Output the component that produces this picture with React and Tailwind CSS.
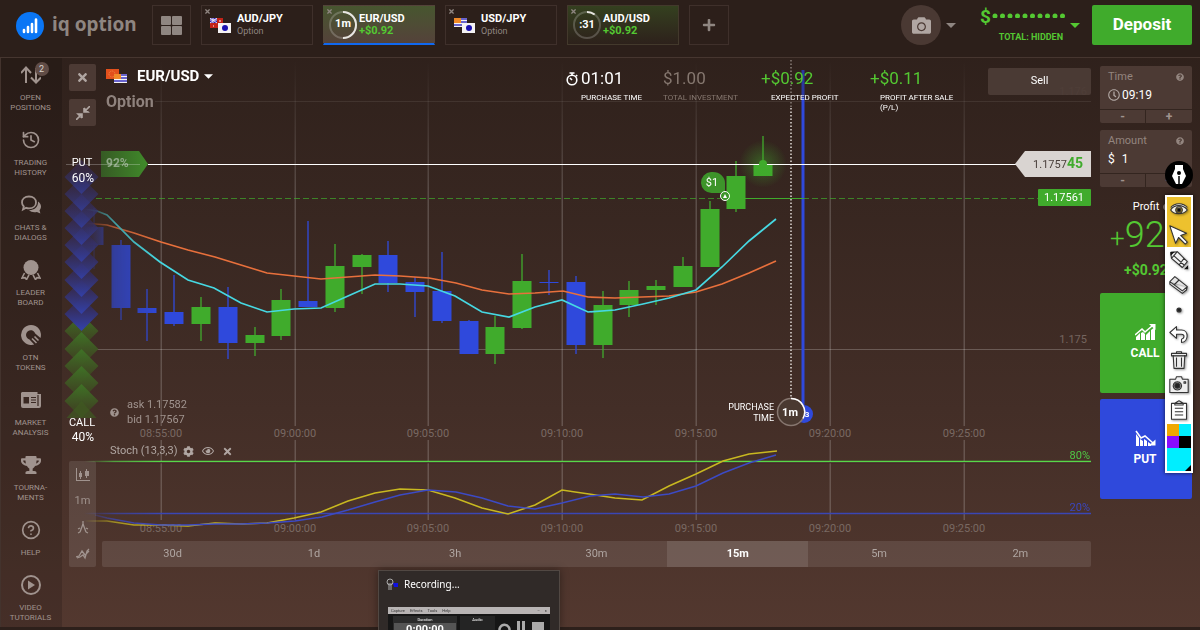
import React from "react";
import { FaCamera, FaCog, FaPlus, FaQuestionCircle, FaRegClock, FaRegEye, FaTimes, FaTrophy } from "react-icons/fa";
import { CircleHelp, History } from "lucide-react";

const GREEN = "#40ab2c";
const BLUE = "#2f49dc";

// x, top of wick, bottom of wick, top of body, bottom of body, rising
const candles = [
  [94, 208, 269, 227, 245, false],
  [121, 240, 320, 245, 308, false],
  [147, 289, 341, 308, 313, false],
  [174, 275, 326, 312, 324, false],
  [201, 297, 341, 307, 324, true],
  [228, 287, 359, 307, 343, false],
  [255, 327, 356, 335, 343, true],
  [281, 289, 340, 300, 336, true],
  [308, 221, 307, 301, 307, false],
  [335, 244, 312, 266, 308, true],
  [362, 254, 294, 255, 267, true],
  [388, 241, 292, 255, 283, false],
  [415, 277, 317, 282, 292, false],
  [442, 252, 323, 291, 321, false],
  [469, 320, 354, 321, 354, false],
  [495, 316, 364, 327, 354, true],
  [522, 254, 329, 281, 328, true],
  [549, 270, 295, 282, 283, false],
  [576, 276, 354, 282, 345, false],
  [603, 291, 358, 305, 345, true],
  [629, 281, 317, 290, 305, true],
  [656, 280, 305, 286, 290, true],
  [683, 257, 287, 266, 287, true],
  [710, 201, 267, 209, 267, true],
  [736, 161, 212, 176, 209, true],
  [763, 136, 176, 164, 176, true],
];

const fastLine =
  "84,209 97,211 107,215 134,242 160,262 188,280 214,288 241,303 267,312 294,309 321,308 348,296 375,284 400,284 428,286 455,296 482,312 509,317 535,307 562,300 588,312 615,310 643,304 669,298 696,290 722,267 749,241 776,219";
const slowLine =
  "84,223 107,225 134,233 161,242 188,250 215,257 241,265 267,273 294,276 321,279 348,277 375,275 400,276 429,278 456,283 482,290 509,294 535,293 563,291 588,297 615,298 642,297 669,296 696,292 722,284 749,273 776,261";
const stochK =
  "84,521 107,521 134,525 161,525 188,526 215,523 241,524 267,523 294,518 321,512 348,501 375,493 400,489 428,490 455,498 482,508 508,514 535,505 562,490 589,494 615,498 642,500 669,486 696,474 723,461 749,454 777,451";
const stochD =
  "95,515 107,518 134,523 161,525 188,525 215,524 241,524 268,523 295,521 322,517 348,510 375,502 400,495 428,490 456,492 482,498 508,506 535,509 562,503 590,496 615,494 643,497 669,494 696,486 723,473 749,463 776,455";

const timeMarks = [
  [161, "08:55:00"],
  [295, "09:00:00"],
  [428, "09:05:00"],
  [562, "09:10:00"],
  [696, "09:15:00"],
  [830, "09:20:00"],
  [964, "09:25:00"],
];

const putMarks = [314, 297, 280, 262, 245, 228, 211, 194, 177];
const callMarks = [331, 349, 366, 383, 401];

const timeframes = ["30d", "1d", "3h", "30m", "15m", "5m", "2m"];

const PositionsIcon = () => (
  <svg viewBox="0 0 20 20" className="h-5 w-5" fill="none" stroke="currentColor" strokeWidth="2">
    <path d="M5 18V2M0 8l5-5.500L10 8M15 3v14M10 12.500l5 5 5-5" />
  </svg>
);

const ChatsIcon = () => (
  <svg viewBox="0 0 20 20" className="h-5 w-5" fill="none" stroke="currentColor" strokeWidth="1.800">
    <path d="M8 1.500c4.200 0 7 2.600 7 5.900s-2.800 5.900-7 5.900c-1 0-2-.2-2.800-.5L2 14.500l.8-3C1.600 10.300 1 9 1 7.400 1 4.100 3.800 1.500 8 1.500z" />
    <path d="M17 6.500c1.800 1.200 3 3 3 5 0 1.500-.6 2.700-1.500 3.700l.9 3.300-3.500-1.600c-3 .7-6 .1-8-1.700 5 .2 9.500-3 9.100-8.700z" fill="currentColor" stroke="none" />
  </svg>
);

const LeaderIcon = () => (
  <svg viewBox="0 0 20 20" className="h-5 w-5">
    <circle cx="10" cy="7.500" r="7.500" fill="currentColor" />
    <path d="M3.500 13L1 18l3-.4 1.500 2 2.500-4.800M16.500 13l2.500 5-3-.4-1.500 2-2.500-4.800" fill="none" stroke="currentColor" strokeWidth="1.600" />
  </svg>
);

const TokensIcon = () => (
  <svg viewBox="0 0 20 20" className="h-5 w-5" fill="currentColor">
    <path d="M10 0a10 10 0 0 1 9.500 13l-5.300-4.600A4.700 4.700 0 1 0 8.500 14.500l4.700 5A10 10 0 1 1 10 0z" />
    <path d="M11 13.500l4.500 4.500M13.500 11.500l4 4" stroke="currentColor" strokeWidth="1.600" />
  </svg>
);

const NewsIcon = () => (
  <svg viewBox="0 0 20 20" className="h-5 w-5">
    <path d="M1 2h15.500v2H20v12a2 2 0 0 1-2 2H2a2 2 0 0 1-2-2V3z" fill="currentColor" />
    <path d="M2.500 7H8v6.500H2.500z" fill="#3a2822" />
    <path d="M10 7.500h5M10 10h5M10 12.500h5M17 5v11" stroke="#3a2822" strokeWidth="1.200" />
  </svg>
);

const PlayIcon = () => (
  <svg viewBox="0 0 20 20" className="h-5 w-5">
    <circle cx="10" cy="10" r="9" fill="none" stroke="currentColor" strokeWidth="2" />
    <path d="M7 5.500l7 4.500-7 4.500z" fill="currentColor" />
  </svg>
);

const menu = [
  { lines: ["OPEN", "POSITIONS"], icon: <PositionsIcon />, badge: 2 },
  { lines: ["TRADING", "HISTORY"], icon: <History className="h-5 w-5" /> },
  { lines: ["CHATS &", "DIALOGS"], icon: <ChatsIcon /> },
  { lines: ["LEADER", "BOARD"], icon: <LeaderIcon /> },
  { lines: ["OTN", "TOKENS"], icon: <TokensIcon /> },
  { lines: ["MARKET", "ANALYSIS"], icon: <NewsIcon /> },
  { lines: ["TOURNA-", "MENTS"], icon: <FaTrophy className="h-5 w-5" /> },
  { lines: ["HELP"], icon: <CircleHelp className="h-5 w-5" /> },
  { lines: ["VIDEO", "TUTORIALS"], icon: <PlayIcon /> },
];

const Flag = ({ name, x, y }) => {
  if (name === "jp") {
    return (
      <g>
        <rect x={x} y={y} width="13" height="10" fill="#f4f2f4" />
        <circle cx={x + 7} cy={y + 5} r="3" fill="#1a10b0" />
      </g>
    );
  }
  if (name === "au") {
    return (
      <g>
        <rect x={x} y={y} width="13" height="10" fill="#c22318" />
        <rect x={x} y={y} width="7" height="5" fill="#2a22b8" />
        <path d={`M${x} ${y}l7 5M${x + 7} ${y}l-7 5M${x + 3} ${y}v5M${x} ${y + 2}h7`} stroke="#f0e8f0" strokeWidth="1" />
        <path d={`M${x + 9} ${y + 3}h2M${x + 3} ${y + 8}h1M${x + 10} ${y + 7}h1`} stroke="#fff" />
      </g>
    );
  }
  if (name === "eu") {
    return (
      <g>
        <rect x={x} y={y} width="13" height="10" fill="#e2501c" />
        <circle cx={x + 6} cy={y + 5} r="3" fill="none" stroke="#f58a4a" strokeDasharray="1 1" />
      </g>
    );
  }
  return (
    <g>
      <rect x={x} y={y} width="13" height="9" fill="#f4f2f4" />
      <path d={`M${x} ${y + 1}h13M${x} ${y + 4}h13M${x} ${y + 7}h13`} stroke="#3a34c0" strokeWidth="1.500" />
      <rect x={x} y={y} width="7" height="5" fill="#f08a28" />
    </g>
  );
};

const FlagPair = ({ back, front }) => (
  <svg viewBox="0 0 22 15" className="h-[15px] w-[22px] shrink-0">
    <Flag name={back} x={0} y={0} />
    <Flag name={front} x={8} y={5} />
  </svg>
);

const Ring = ({ label, arc }) => (
  <span className="relative flex h-[30px] w-[30px] shrink-0 items-center justify-center text-[11px] font-bold text-white">
    <svg viewBox="0 0 30 30" className="absolute inset-0" fill="none" strokeWidth="2">
      <circle cx="15" cy="15" r="13" stroke="#ffffff" strokeOpacity="0.200" />
      <circle cx="15" cy="15" r="13" stroke="#e8e6e2" pathLength="100" strokeDasharray={`${arc} 100`} transform="rotate(-90 15 15)" />
    </svg>
    {label}
  </span>
);

const AssetTab = ({ pair, note, win, active, children }) => (
  <div
    className={
      "relative h-10 w-28 border " +
      (active
        ? "border-transparent border-b-2 border-b-[#1068f0] bg-linear-to-b from-[#47562f] to-[#54423a]"
        : win
          ? "border-[#43392c] bg-linear-to-b from-[#34401f] to-[#2d211b]"
          : "border-[#3f302b]")
    }
  >
    <button aria-label={`Close ${pair}`} className="absolute top-[2px] left-[2px] text-[7px] text-[#8f8681]">
      <FaTimes />
    </button>
    <button className="flex h-full w-full items-center pl-[3px] text-left">
      <span className="flex w-8 shrink-0 justify-center">{children}</span>
      <span className="flex flex-col">
        <span className="text-[11px] leading-3 font-bold text-white">{pair}</span>
        <span className={win ? "text-[11px] leading-3 font-bold text-[#54c832]" : "text-[9px] leading-3 text-[#8f8681]"}>
          {note}
        </span>
      </span>
    </button>
  </div>
);

const Header = () => (
  <header className="flex h-[58px] shrink-0 items-start border-b border-[#463630] bg-[#2c1f1a] pt-[5px] pr-2 pl-4">
    <a href="#" className="flex h-[42px] w-[136px] items-center gap-2">
      <svg viewBox="0 0 28 28" className="h-7 w-7">
        <circle cx="14" cy="14" r="14" fill="#0a76f5" />
        <path d="M8 18v2M12 15v5M16 12v8M20 7.500v12.500" stroke="#fff" strokeWidth="2.600" strokeLinecap="round" />
      </svg>
      <span className="pb-1 font-['Noto_Sans'] text-[19px] leading-7 font-bold whitespace-nowrap text-[#8f8681]">iq option</span>
    </a>
    <nav className="flex gap-[10px]">
      <button aria-label="All assets" className="flex h-10 w-[39px] items-center justify-center border border-[#3f302b]">
        <svg viewBox="0 0 21 19" className="h-[19px] w-[21px]" fill="#8f8681">
          <rect width="10" height="9" rx="1" />
          <rect x="11" width="10" height="9" rx="1" />
          <rect y="10" width="10" height="9" rx="1" />
          <rect x="11" y="10" width="10" height="9" rx="1" />
        </svg>
      </button>
      <AssetTab pair="AUD/JPY" note="Option">
        <FlagPair back="au" front="jp" />
      </AssetTab>
      <AssetTab pair="EUR/USD" note="+$0.92" win active>
        <Ring label="1m" arc={50} />
      </AssetTab>
      <AssetTab pair="USD/JPY" note="Option">
        <FlagPair back="us" front="jp" />
      </AssetTab>
      <AssetTab pair="AUD/USD" note="+$0.92" win>
        <Ring label=":31" arc={10} />
      </AssetTab>
      <button aria-label="Add asset" className="flex h-10 w-10 items-center justify-center border border-[#3f302b] text-sm text-[#8f8681]">
        <FaPlus />
      </button>
    </nav>
    <div className="ml-auto flex items-center">
      <button aria-label="Profile" className="flex h-10 w-10 items-center justify-center rounded-full bg-[#4a3933] text-[19px] text-[#b0a6a2]">
        <FaCamera />
      </button>
      <svg viewBox="0 0 10 5" className="mr-6 ml-[5px] h-[5px] w-[10px]" fill="#8f8681">
        <path d="M0 0h10L5 5z" />
      </svg>
      <button className="flex flex-col items-end text-[#54c832]">
        <span className="flex h-6 items-center gap-px text-[19px] font-bold">
          $
          <svg viewBox="0 0 74 6" className="mb-1 h-[6px] w-[74px]" fill="currentColor">
            {[...Array(10)].map((_, index) => (
              <circle key={index} cx={3 + index * 7.5} cy="4" r="2.500" />
            ))}
          </svg>
        </span>
        <span className="pr-[3px] text-[9px] leading-4 font-bold">TOTAL: HIDDEN</span>
      </button>
      <svg viewBox="0 0 10 5" className="mr-3 ml-1 h-[5px] w-[10px]" fill="#54c832">
        <path d="M0 0h10L5 5z" />
      </svg>
      <button className="h-10 w-[100px] rounded-xs bg-[#40ab2c] text-[17px] font-bold text-white">Deposit</button>
    </div>
  </header>
);

const Sidebar = () => (
  <aside className="flex w-[62px] shrink-0 flex-col gap-[17px] border-l border-[#43332d] bg-black/15 pt-[7px] pr-[2px] text-[#a0938e]">
    {menu.map((item) => (
      <a href="#" key={item.lines[0]} className="flex flex-col items-center gap-2 text-center text-[8px] leading-[10px]">
        <span className="relative">
          {item.icon}
          {item.badge && (
            <span className="absolute -top-[3px] left-[14px] flex h-[14px] w-[14px] items-center justify-center rounded-full bg-[#604c46] text-[9px] text-[#d8d0cc]">
              {item.badge}
            </span>
          )}
        </span>
        <span className="flex flex-col">
          {item.lines.map((line) => (
            <span key={line}>{line}</span>
          ))}
        </span>
      </a>
    ))}
  </aside>
);

const Chart = () => (
  <svg viewBox="62 58 1030 569" className="absolute inset-x-0 top-0 w-full" fontFamily="Roboto, sans-serif">
    <defs>
      <linearGradient id="gridFade" gradientUnits="userSpaceOnUse" x1="0" y1="60" x2="0" y2="200">
        <stop offset="0" stopColor="#fff" stopOpacity="0" />
        <stop offset="1" stopColor="#fff" stopOpacity="0.180" />
      </linearGradient>
      <linearGradient id="leftFade" gradientUnits="userSpaceOnUse" x1="84" y1="0" x2="160" y2="0">
        <stop offset="0" stopColor="#000" />
        <stop offset="0.400" stopColor="#aaa" />
        <stop offset="1" stopColor="#fff" />
      </linearGradient>
      <mask id="fade" maskUnits="userSpaceOnUse" x="62" y="58" width="1030" height="569">
        <rect x="62" y="58" width="1030" height="569" fill="url(#leftFade)" />
      </mask>
      <linearGradient id="putFill" x1="0" y1="0" x2="0" y2="1">
        <stop offset="0.300" stopColor="#352c58" />
        <stop offset="1" stopColor="#3342ae" />
      </linearGradient>
      <linearGradient id="callFill" x1="0" y1="0" x2="0" y2="1">
        <stop offset="0" stopColor="#3f7426" />
        <stop offset="0.700" stopColor="#3f4a22" />
      </linearGradient>
      <linearGradient id="payout" x1="0" y1="0" x2="1" y2="0">
        <stop offset="0" stopColor="#365a24" />
        <stop offset="1" stopColor="#408a2a" />
      </linearGradient>
      <radialGradient id="glow">
        <stop offset="0" stopColor="#40ab2c" stopOpacity="0.450" />
        <stop offset="1" stopColor="#40ab2c" stopOpacity="0" />
      </radialGradient>
    </defs>

    {/* Grid */}
    {timeMarks.map(([x, label]) => (
      <g key={label}>
        <rect x={x - 0.5} y="60" width="1.500" height="366" fill="url(#gridFade)" />
        <rect x={x - 0.5} y="440" width="1.500" height="80" fill="#fff" fillOpacity="0.180" />
        <g fill="#796963" fontSize="11" textAnchor="middle">
          <text x={x} y="437">{label}</text>
          <text x={x} y="532">{label}</text>
        </g>
      </g>
    ))}
    <path d="M155 101.500H1091" stroke="#fff" strokeOpacity="0.080" />
    <path d="M96 349.500H1091" stroke="#fff" strokeOpacity="0.220" />
    <text x="1087" y="95" fill="#4c3d37" fontSize="11" textAnchor="end">1.176</text>
    <text x="1087" y="343" fill="#75655f" fontSize="11" textAnchor="end">1.175</text>

    {/* Candles and averages */}
    <g mask="url(#fade)">
      {candles.map(([x, high, low, top, bottom, up]) => (
        <g key={x} fill={up ? GREEN : BLUE}>
          <rect x={x - 1} y={high} width="2" height={low - high} opacity="0.650" />
          <rect x={x - 9.5} y={top} width="19" height={bottom - top} />
        </g>
      ))}
      <polyline points={slowLine} fill="none" stroke="#e8703c" strokeWidth="1.700" />
      <polyline points={fastLine} fill="none" stroke="#46d8e2" strokeWidth="1.700" />
    </g>

    {/* Stochastic */}
    <g mask="url(#fade)" fill="none" strokeWidth="1.500">
      <path d="M84 462.500H1091" stroke="#45102a" />
      <path d="M84 461.500H1091" stroke="#58d848" />
      <path d="M84 513.500H1091" stroke="#3a46b4" />
      <polyline points={stochK} stroke="#c8b820" />
      <polyline points={stochD} stroke="#3c4ac4" />
    </g>
    <text x="1090" y="459" fill="#50c846" fontSize="11" textAnchor="end">80%</text>
    <text x="1090" y="511" fill="#3a46c0" fontSize="11" textAnchor="end">20%</text>

    {/* Payout */}
    <path d="M101 151h38l9 13-9 13h-38z" fill="url(#payout)" />
    <text x="106" y="167" fill="#8fa887" fontSize="12" fontWeight="700">92%</text>

    {/* Expiry and purchase lines */}
    <path d="M791 60V108" stroke="#e0dad6" strokeOpacity="0.500" strokeWidth="1.500" strokeDasharray="1.500 2" />
    <path d="M791 108V400" stroke="#e0dad6" strokeWidth="1.500" strokeDasharray="1.500 2" />
    <path d="M803 98V414" stroke={BLUE} strokeWidth="3" />
    <path d="M803 70V98" stroke="#2a37a0" strokeWidth="3" />

    {/* Quote line */}
    <circle cx="763" cy="164" r="24" fill="url(#glow)" />
    <path d="M66 164.500H140" stroke="#fff" strokeOpacity="0.250" />
    <path d="M148 164.500H1018" stroke="#fff" />
    <circle cx="763" cy="164" r="4" fill={GREEN} />
    <path d="M1015 164l10-13h66v26h-66z" fill="#d9d4d1" />
    <text x="1083" y="168" fill="#4a403c" fontSize="11" textAnchor="end">
      1.1757<tspan fill={GREEN} fontSize="14" fontWeight="700">45</tspan>
    </text>

    {/* Open position */}
    <path d="M96 198.500H720" stroke={GREEN} strokeOpacity="0.700" strokeDasharray="6 3" />
    <path d="M730 198.500H803" stroke={GREEN} />
    <path d="M803 198.500H1038" stroke={GREEN} strokeOpacity="0.700" strokeDasharray="6 3" />
    <rect x="1038" y="189" width="53" height="17" rx="1" fill={GREEN} />
    <text x="1064" y="201" fill="#fff" fontSize="11" textAnchor="middle">1.17561</text>
    <path d="M711 172a10.500 10.500 0 1 0 1 21h13v-10a12 11 0 0 0-12-11z" fill="#3d942a" />
    <text x="712" y="186" fill="#fff" fontSize="11" textAnchor="middle">$1</text>
    <circle cx="725" cy="196" r="4.500" fill="#3d942a" stroke="#fff" />
    <path d="M723 198l2-4 2 4z" fill="#fff" />

    {/* Crowd mood */}
    {callMarks.map((y) => (
      <path key={y} d={`M81.500 ${y - 17}l17 17-17 17-17-17z`} fill="url(#callFill)" opacity="0.950" />
    ))}
    <path d="M81.500 401l15 17h-30z" fill="#3f5a22" opacity="0.700" />
    {putMarks.map((y, index) => (
      <path key={y} d={`M81.500 ${y - 17}l17 17-17 17-17-17z`} fill="url(#putFill)" opacity={1 - index * 0.05} />
    ))}
    <g fill="#fff" textAnchor="middle">
      <text x="82" y="166" fontSize="11">PUT</text>
      <text x="83" y="182" fontSize="12">60%</text>
      <text x="82" y="426" fontSize="11">CALL</text>
      <text x="83" y="441" fontSize="12">40%</text>
    </g>

    {/* Purchase deadline */}
    <circle cx="804" cy="414" r="9" fill={BLUE} />
    <text x="807" y="417" fill="#fff" fontSize="8" fontWeight="700" textAnchor="middle">3</text>
    <circle cx="791" cy="412" r="13.500" fill="#4a3931" stroke="#86766f" strokeWidth="1.500" />
    <path d="M791 398.500a13.500 13.500 0 0 1 12 20" fill="none" stroke="#fff" strokeWidth="1.500" />
    <text x="790" y="416" fill="#fff" fontSize="11" fontWeight="700" textAnchor="middle">1m</text>
    <g fill="#fff" fontSize="9" textAnchor="end">
      <text x="774" y="410">PURCHASE</text>
      <text x="774" y="421">TIME</text>
    </g>
  </svg>
);

const Stat = ({ value, label, className, labelClass }) => (
  <div className={className}>
    <p className="text-[17px] leading-5">{value}</p>
    <p className={"pt-[5px] text-[8px] leading-[10px] " + labelClass}>{label}</p>
  </div>
);

const StopwatchIcon = () => (
  <svg viewBox="0 0 12 14" className="h-[14px] w-3" fill="none" stroke="currentColor" strokeWidth="1.600">
    <circle cx="6" cy="8" r="4.800" />
    <path d="M6 8L4 6M6 3V1M3.500 1h5M10 3l1.200 1.200" />
  </svg>
);

const tools = [
  ["Chart type", <svg viewBox="0 0 14 13" className="h-[13px] w-[14px]" fill="currentColor"><path d="M0 0h1v12h13v1H0zM3 5h3v4H3zM4 3h1v8H4zM9 3h4v5H9zM10 1h1v9h-1z" /></svg>],
  ["Candle size", "1m"],
  ["Drawing", <svg viewBox="0 0 12 13" className="h-[13px] w-3" fill="none" stroke="currentColor" strokeWidth="1.300"><path d="M6 0v3M6 3L3 11M6 3l3 8M1 12l2-1M11 12l-2-1M3 7L1 8M9 7l2 1" /></svg>],
  ["Indicators", <svg viewBox="0 0 14 12" className="h-3 w-[14px]" fill="none" stroke="currentColor" strokeWidth="1.300"><path d="M0 9l3-1 3-5 3 4 4-4M1 10l3-1 3-2 2 3 2-7 2-2" /></svg>],
];

const Board = () => (
  <main className="relative min-w-0 flex-1 pt-[6px] pr-px pl-[7px]">
    <Chart />
    <div className="relative flex h-[62px] items-start">
      <div className="flex flex-col gap-2 text-[#b0a6a2]">
        <button aria-label="Close chart" className="flex h-[27px] w-[27px] items-center justify-center rounded-xs bg-[#4c3a34] text-[13px]">
          <FaTimes />
        </button>
        <button aria-label="Shrink chart" className="flex h-[27px] w-[27px] items-center justify-center rounded-xs bg-[#4c3a34]">
          <svg viewBox="0 0 14 14" className="h-[14px] w-[14px]" fill="currentColor" stroke="currentColor" strokeWidth="1.600">
            <path d="M8 2v4h4L8 2M8 6l6-6M6 12V8H2l4 4M6 8l-6 6" />
          </svg>
        </button>
      </div>
      <div className="ml-[10px]">
        <button className="flex h-6 items-center text-[15px] font-bold text-white">
          <FlagPair back="eu" front="us" />
          <span className="ml-[9px]">EUR/USD</span>
          <svg viewBox="0 0 8 4" className="ml-[5px] h-[5px] w-[9px]" fill="currentColor">
            <path d="M0 0h8L4 4z" />
          </svg>
        </button>
        <p className="mt-1 text-[16px] leading-5 font-bold text-[#8f827d]">Option</p>
      </div>
      <div className="mt-1 ml-auto flex text-white">
        <span className="mt-1 mr-[3px]">
          <StopwatchIcon />
        </span>
        <Stat className="w-[82px]" value="01:01" label="PURCHASE TIME" labelClass="" />
        <Stat className="w-[98px] text-[#85776f]" value="$1.00" label="TOTAL INVESTMENT" labelClass="" />
        <Stat className="w-[109px] text-[#54c832]" value="+$0.92" label="EXPECTED PROFIT" labelClass="pl-[10px] text-white" />
        <Stat className="w-[118px] text-[#54c832]" value="+$0.11" label="PROFIT AFTER SALE (P/L)" labelClass="pr-6 pl-[10px] text-white" />
        <button className="h-[27px] w-[103px] rounded-xs bg-[#4f3e38]/85 text-[11px]">Sell</button>
      </div>
    </div>

    <div className="relative mt-[271px] ml-[41px] flex items-center gap-2 text-[11px] leading-[15px] text-[#a0938e]">
      <FaQuestionCircle className="text-[9px]" />
      <p>
        ask 1.17582
        <br />
        bid 1.17567
      </p>
    </div>
    <div className="relative mt-[14px] ml-[41px] flex h-5 items-center gap-2 text-[11px] text-[#b0a6a2]">
      <span className="-mr-[3px]">Stoch (13,3,3)</span>
      <button aria-label="Indicator settings">
        <FaCog />
      </button>
      <button aria-label="Show indicator">
        <FaRegEye className="text-[12px]" />
      </button>
      <button aria-label="Remove indicator">
        <FaTimes />
      </button>
    </div>

    <div className="relative flex items-end gap-[6px]">
      <div className="flex h-[106px] w-[27px] flex-col rounded-xs bg-white/10 text-[11px] text-[#a0938e]">
        {tools.map(([label, icon]) => (
          <button key={label} aria-label={label} className="flex flex-1 items-center justify-center">
            {icon}
          </button>
        ))}
      </div>
      <div className="grid flex-1 grid-cols-7 overflow-hidden rounded-xs bg-white/10 text-[11px] text-[#b0a6a2]">
        {timeframes.map((frame) => (
          <button key={frame} className={frame === "15m" ? "h-[26px] bg-white/10 font-bold text-white" : "h-[26px]"}>
            {frame}
          </button>
        ))}
      </div>
    </div>
  </main>
);

const Stepper = ({ label, value, icon, id }) => (
  <div className="overflow-hidden rounded-xs bg-[#4c3a34]">
    <div className="h-[43px] pt-1 pr-2 pl-2">
      <label htmlFor={id} className="flex h-[14px] items-center justify-between text-[11px] text-[#93857f]">
        {label}
        <FaQuestionCircle className="text-[8px]" />
      </label>
      <div className="mt-px flex h-5 items-center gap-[2px] text-[12px] text-white">
        {icon}
        <input id={id} defaultValue={value} className="w-12 bg-transparent outline-none" />
      </div>
    </div>
    <div className="grid grid-cols-2 border-t border-[#33251f] text-[12px] leading-3 font-bold text-[#a0938e]">
      <button aria-label={`Decrease ${label}`} className="h-[13px] border-r border-[#33251f]">-</button>
      <button aria-label={`Increase ${label}`} className="h-[13px]">+</button>
    </div>
  </div>
);

const TradePanel = () => (
  <aside className="flex w-[108px] shrink-0 flex-col pt-2 pr-2 pl-2">
    <Stepper id="time" label="Time" value="09:19" icon={<FaRegClock className="text-[12px] text-[#b0a6a2]" />} />
    <div className="mt-[7px]">
      <Stepper id="amount" label="Amount" value="1" icon={<span className="mr-[5px]">$</span>} />
    </div>
    <p className="mt-3 flex h-4 items-center justify-center gap-1 pl-3 text-[11px] text-white">
      Profit <FaQuestionCircle className="text-[8px] text-[#93857f]" />
    </p>
    <p className="flex items-baseline pl-[10px] text-[36px] leading-10 font-light whitespace-nowrap text-[#54c832]">
      <span className="text-[26px]">+</span>92%
    </p>
    <p className="text-center text-[14px] leading-6 font-bold text-[#54c832]">+$0.92</p>
    <button className="mt-[11px] flex h-[100px] flex-col items-center justify-center gap-1 rounded-xs bg-[#40ab2c] pr-[2px] text-[12px] font-bold text-white">
      <svg viewBox="0 0 21 16" className="h-4 w-[21px]" fill="currentColor">
        <path d="M1 13l4-4v7H1zM6 9l2-1 2 2v6H6zM11 11l4-4v9h-4zM16 6l4-3v13h-4z" />
        <path d="M0 11l7-6 3 3 7-6" fill="none" stroke="currentColor" strokeWidth="1.600" />
        <path d="M14 0h6.500v6z" />
      </svg>
      CALL
    </button>
    <button className="mt-[6px] flex h-[100px] flex-col items-center justify-center gap-1 rounded-xs bg-[#2f49dc] pr-[2px] text-[12px] font-bold text-white">
      <svg viewBox="0 0 21 16" className="h-4 w-[21px]" fill="currentColor">
        <path d="M1 4l3 4v8H1zM5 9l3 2v5H5zM9 9l3 2v5H9zM13 12l3 2v2h-3z" />
        <path d="M1 1l5 7 4-2 8 7" fill="none" stroke="currentColor" strokeWidth="1.600" />
        <path d="M14 15.500h6.500v-6z" />
      </svg>
      PUT
    </button>
  </aside>
);

const inkTools = [
  ["Show ink", <path d="M2 12c4-7 15-7 20 0-5 6-16 6-20 0zM2 9c5-6 15-6 20 0M12 8a4 4 0 1 0 .1 0z" fill="#f4f2ea" />, <circle cx="12" cy="12" r="2" fill="#111" />],
  ["Cursor", <path d="M1 1l20 9-7 2.500 8 8-2.500 2.500-8-8L8 22z" fill="#fff" />],
  ["Pencil", <path d="M2 3l8-1 12 12-6 7L3 10zM3 10l7-8M12 18l6-8M6 7l12 11" fill="#f2f2f2" />, <path d="M2 2h5L2 7zM23 18v5h-5z" fill="#111" stroke="none" />],
  ["Eraser", <path d="M1 8l6-6 15 12-1 4-5 4L1 11zM1 8l15 11 6-5M6 12l6-6" fill="#e4e4e4" />],
  ["Point size", <circle cx="12" cy="12" r="2.500" fill="#222" />],
  ["Undo", <path d="M1 9l8-7v4h6c9 0 9 14 0 15v-4c4-1 4-6 0-6H9v5z" fill="#fff" />],
  ["Clear", <path d="M5 6l1 16h12l1-16M3 4h18v3H3zM9 4V2h6v2M9 9v11M15 9v11" fill="#eee" />],
  ["Snapshot", <path d="M1 5h7l1-3h6l1 3h7v16H1zM10 8a5 5 0 1 0 .1 0zM18 8h2v2h-2z" fill="#eee" />, <circle cx="10" cy="13" r="3" fill="#222" />],
  ["Clipboard", <path d="M3 4h18v19H3zM7 4l5-3 5 3v2H7zM7 10h10M7 14h10M7 18h10" fill="#fff" />],
];

const InkToolbar = () => (
  <div className="absolute top-[161px] right-[7px] flex flex-col items-center gap-[6px]">
    <button aria-label="Ink" className="flex h-7 w-7 items-center justify-center rounded-full bg-black">
      <svg viewBox="0 0 16 22" className="h-[22px] w-4">
        <path d="M4 1h8v4l3 7-4 8H5L1 12l3-7z" fill="#fff" />
        <path d="M8 12v9" stroke="#000" strokeWidth="1.500" />
        <circle cx="8" cy="9" r="2" fill="#000" />
      </svg>
    </button>
    <div className="w-7 border-2 border-white bg-white shadow-[0_0_4px_rgba(0,0,0,0.7)]">
      {inkTools.map(([label, shape, detail], index) => (
        <button
          key={label}
          aria-label={label}
          className={"flex h-[25px] w-6 items-center justify-center " + (index < 2 ? "bg-[#edc12e]" : "bg-white")}
        >
          <svg viewBox="0 0 24 24" className="h-5 w-5 drop-shadow-[1px_1px_1px_rgba(0,0,0,0.4)]" fill="none" stroke="#333" strokeWidth="1.300" strokeLinejoin="round">
            {shape}
            {detail}
          </svg>
        </button>
      ))}
      <div className="mt-[2px] grid grid-cols-2">
        <button aria-label="Orange" className="h-3 bg-[#f0a800]"></button>
        <button aria-label="Cyan" className="h-3 bg-[#00eeff]"></button>
        <button aria-label="Purple" className="h-3 bg-[#8a0cff]"></button>
        <button aria-label="Black" className="h-3 bg-black"></button>
      </div>
      <button aria-label="Current color" className="flex h-[23px] w-6 items-end justify-end bg-[#00eeff]">
        <svg viewBox="0 0 6 6" className="h-[6px] w-[6px]">
          <path d="M6 0v6H0z" />
        </svg>
      </button>
    </div>
  </div>
);

const RecorderPreview = () => (
  <div className="absolute bottom-0 left-[378px] h-[60px] w-[182px] overflow-hidden border border-b-0 border-[#514843] bg-[#302a28] px-[9px] shadow-[0_0_8px_rgba(0,0,0,0.4)]">
    <div className="flex h-[27px] items-center font-['Noto_Sans'] text-[10px] text-white">
      <svg viewBox="0 0 14 14" className="mr-1 ml-[-2px] h-[14px] w-[14px]">
        <path d="M7 5h5v4H8z" fill="#1010e0" />
        <circle cx="4" cy="4" r="3" fill="none" stroke="#aaa" />
        <path d="M3 5v7M5 5v7" stroke="#aaa" />
      </svg>
      Recording...
    </div>
    <div className="mt-[9px] bg-[#161616] text-white">
      <div className="flex h-[7px] items-center gap-[5px] bg-[#b8b4b4] px-[3px] text-[4px] leading-[6px] text-[#333]">
        <span>Capture</span>
        <span>Effects</span>
        <span>Tools</span>
        <span>Help</span>
        <span className="ml-auto">–</span>
        <span>×</span>
      </div>
      <div className="flex gap-[3px] px-[5px] pt-[2px]">
        <div className="h-5 w-16 bg-[#2b2b2b] text-center">
          <p className="text-[4px] leading-[7px]">Duration</p>
          <p className="mx-px bg-[#555] text-[11px] leading-[13px] font-bold">0:00:00</p>
        </div>
        <div className="h-5 w-[35px] bg-[#242424] text-center text-[4px] leading-[7px]">Audio</div>
        <svg viewBox="0 0 46 16" className="mt-1 h-4 w-[46px]" fill="#aaa">
          <path d="M2 12a5 5 0 1 1 9 0" fill="none" stroke="#aaa" strokeWidth="2.500" />
          <path d="M19 1h3v14h-3zM24 1h3v14h-3zM34 2h12v14H34z" />
        </svg>
      </div>
    </div>
  </div>
);

const App = () => {
  return (
    <div className="relative flex h-screen flex-col overflow-hidden bg-linear-to-b from-[#2c1f1a] via-[#432e27] via-65% to-[#53382f] font-[Roboto,sans-serif]">
      <Header />
      <div className="flex min-h-0 flex-1 overflow-hidden border-b-[3px] border-[#2d201b]">
        <Sidebar />
        <Board />
        <TradePanel />
      </div>
      <InkToolbar />
      <RecorderPreview />
    </div>
  );
};

export default App;
